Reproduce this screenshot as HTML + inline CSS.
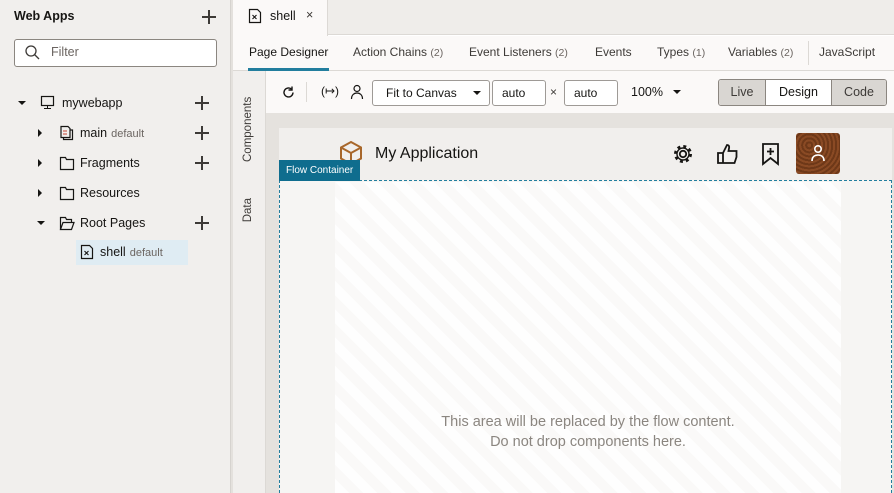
<!DOCTYPE html>
<html><head><style>
*{box-sizing:border-box;margin:0;padding:0}
body{width:894px;height:493px;overflow:hidden;font-family:"Liberation Sans",sans-serif;color:#161513;background:#fff;position:relative;font-size:13px}
.abs{position:absolute}
.plus{position:absolute;width:14px;height:14px}
.plus:before,.plus:after{content:"";position:absolute;background:#3d3a37}
.plus:before{left:6px;top:0;width:1.5px;height:14px}
.plus:after{top:6px;left:0;height:1.5px;width:14px}
.tri{position:absolute;width:0;height:0}
.tr{border-left:4px solid #161513;border-top:4px solid transparent;border-bottom:4px solid transparent}
.td{border-top:4px solid #161513;border-left:4px solid transparent;border-right:4px solid transparent}
.tree{position:absolute;font-size:12.5px}
.dim{color:#6b6561;font-size:11px;margin-left:4px}
.nav span{position:absolute;top:45px;font-size:12px;color:#3d3a37}
.nav small{color:#6b6561;font-size:10.5px}
.btn{position:absolute;top:80px;height:26px;border:1px solid #9e9a96;border-radius:3px;background:#fff;font-size:12px;line-height:24px;padding-left:9px}
</style></head><body>
<div class="abs" style="left:0;top:0;width:231px;height:493px;background:#f1efed;border-right:1px solid #d6d3cf"></div>
<div class="abs" style="left:231px;top:0;width:2px;height:493px;background:#e4e1dd"></div>
<div class="abs" style="left:14px;top:9px;font-weight:bold;font-size:12.5px">Web Apps</div>
<div class="plus" style="left:202px;top:10px;"></div>
<div class="abs" style="left:14px;top:39px;width:203px;height:28px;border:1px solid #8b8680;border-radius:3px;background:#fff"></div>
<svg class="abs" style="left:24px;top:44px" width="16" height="16"><circle cx="7" cy="7" r="5" fill="none" stroke="#3d3a37" stroke-width="1.3"/><line x1="10.5" y1="10.5" x2="15" y2="15" stroke="#3d3a37" stroke-width="1.3"/></svg>
<div class="abs" style="left:51px;top:45px;color:#6b6561;font-size:12.5px">Filter</div>

<div class="tri td" style="left:18px;top:101px"></div>
<svg class="abs" style="left:40px;top:95px" width="16" height="16"><rect x="1.5" y="1.5" width="12" height="9" fill="none" stroke="#161513" stroke-width="1.2"/><line x1="7.5" y1="10.5" x2="7.5" y2="13" stroke="#161513"/><line x1="4" y1="13.5" x2="11" y2="13.5" stroke="#161513"/></svg>
<div class="tree" style="left:62px;top:96px">mywebapp</div>
<div class="plus" style="left:195px;top:96px"></div>

<div class="tri tr" style="left:38px;top:129px"></div>
<svg class="abs" style="left:59px;top:125px" width="16" height="16"><path d="M2 1.5h7l2 2v9h-9z" fill="none" stroke="#161513" stroke-width="1.2"/><path d="M11 5h2.5v9.5h-9v-2" fill="none" stroke="#161513" stroke-width="1.2"/><line x1="4" y1="6" x2="8" y2="6" stroke="#c74634"/><line x1="4" y1="9" x2="8" y2="9" stroke="#c74634"/></svg>
<div class="tree" style="left:80px;top:126px">main<span class="dim">default</span></div>
<div class="plus" style="left:195px;top:126px"></div>

<div class="tri tr" style="left:38px;top:159px"></div>
<svg class="abs" style="left:59px;top:155px" width="16" height="16"><path d="M1.5 2.5h5l1 2h7v10h-13z" fill="none" stroke="#161513" stroke-width="1.2"/></svg>
<div class="tree" style="left:80px;top:156px">Fragments</div>
<div class="plus" style="left:195px;top:156px"></div>

<div class="tri tr" style="left:38px;top:189px"></div>
<svg class="abs" style="left:59px;top:185px" width="16" height="16"><path d="M1.5 2.5h5l1 2h7v10h-13z" fill="none" stroke="#161513" stroke-width="1.2"/></svg>
<div class="tree" style="left:80px;top:186px">Resources</div>

<div class="tri td" style="left:37px;top:221px"></div>
<svg class="abs" style="left:59px;top:215px" width="16" height="16"><path d="M1.5 14.5v-12h5l1 2h5v3M1.5 14.5l2.5-7h11l-2.5 7z" fill="none" stroke="#161513" stroke-width="1.2"/></svg>
<div class="tree" style="left:80px;top:216px">Root Pages</div>
<div class="plus" style="left:195px;top:216px"></div>

<div class="abs" style="left:76px;top:240px;width:112px;height:25px;background:#dfecf3"></div>
<svg class="abs" style="left:80px;top:244px" width="14" height="16"><path d="M1.5 1.5h8l3 3v10h-11z" fill="none" stroke="#161513" stroke-width="1.2"/><path d="M4.5 7l4 4M8.5 7l-4 4" stroke="#161513" stroke-width="1.1"/></svg>
<div class="tree" style="left:100px;top:245px">shell<span class="dim">default</span></div>

<div class="abs" style="left:233px;top:0;width:661px;height:35px;background:#efedea;border-bottom:1px solid #dcd9d5"></div>
<div class="abs" style="left:233px;top:0;width:95px;height:36px;background:#fbf9f8;border-right:1px solid #dcd9d5"></div>
<svg class="abs" style="left:248px;top:8px" width="14" height="16"><path d="M1.5 1.5h8l3 3v10h-11z" fill="none" stroke="#161513" stroke-width="1.2"/><path d="M4.5 7l4 4M8.5 7l-4 4" stroke="#161513" stroke-width="1.1"/></svg>
<div class="abs" style="left:270px;top:9px;font-size:12.5px">shell</div>
<div class="abs" style="left:306px;top:8px;font-size:12.5px;color:#3d3a37">×</div>

<div class="abs" style="left:233px;top:36px;width:661px;height:35px;background:#fbf9f8;border-bottom:1px solid #dcd9d5"></div>
<div class="nav">
<span style="left:249px;color:#161513">Page Designer</span>
<span style="left:353px">Action Chains <small>(2)</small></span>
<span style="left:469px">Event Listeners <small>(2)</small></span>
<span style="left:595px">Events</span>
<span style="left:657px">Types <small>(1)</small></span>
<span style="left:728px">Variables <small>(2)</small></span>
<span style="left:819px">JavaScript</span>
</div>
<div class="abs" style="left:248px;top:68px;width:81px;height:3px;background:#227e9e"></div>
<div class="abs" style="left:808px;top:41px;width:1px;height:24px;background:#dcd9d5"></div>

<div class="abs" style="left:233px;top:71px;width:33px;height:422px;background:#f1efed;border-right:1px solid #dcd9d5"></div>
<div class="abs" style="left:242px;top:90px;writing-mode:vertical-rl;transform:rotate(180deg);font-size:11.5px;color:#3d3a37;height:72px;text-align:left">Components</div>
<div class="abs" style="left:242px;top:198px;writing-mode:vertical-rl;transform:rotate(180deg);font-size:11.5px;color:#3d3a37">Data</div>

<div class="abs" style="left:266px;top:71px;width:628px;height:42px;background:#fbf9f8"></div>
<svg class="abs" style="left:281px;top:85px" width="15" height="15"><path d="M12 7.5a4.5 4.5 0 1 1-1.5-3.4" fill="none" stroke="#161513" stroke-width="1.4"/><path d="M11 1.5v3.5h-3.5" fill="none" stroke="#161513" stroke-width="1.4"/></svg>
<div class="abs" style="left:306px;top:82px;width:1px;height:20px;background:#dcd9d5"></div>
<div class="abs" style="left:321px;top:84px;font-size:12px">(↦)</div>
<svg class="abs" style="left:350px;top:84px" width="14" height="16"><circle cx="7" cy="4.5" r="3" fill="none" stroke="#161513" stroke-width="1.2"/><path d="M1.5 15c0-4 2.5-6 5.5-6s5.5 2 5.5 6" fill="none" stroke="#161513" stroke-width="1.2"/></svg>
<div class="btn" style="left:372px;width:118px;padding-left:13px">Fit to Canvas<div class="tri td" style="left:100px;top:10px"></div></div>
<div class="btn" style="left:492px;width:54px">auto</div>
<div class="abs" style="left:550px;top:85px;font-size:12px;color:#3d3a37">×</div>
<div class="btn" style="left:564px;width:54px">auto</div>
<div class="abs" style="left:631px;top:85px;font-size:12.5px">100%</div>
<div class="tri td" style="left:673px;top:90px"></div>
<div class="abs" style="left:718px;top:79px;width:169px;height:27px;border:1px solid #8b8680;border-radius:3px;overflow:hidden;display:flex;font-size:12.5px;line-height:25px;text-align:center">
<div style="width:47px;background:#d9d6d2;color:#3d3a37;border-right:1px solid #8b8680">Live</div>
<div style="width:66px;background:#fff;border-right:1px solid #8b8680">Design</div>
<div style="flex:1;background:#d9d6d2;color:#3d3a37">Code</div></div>

<div class="abs" style="left:266px;top:113px;width:628px;height:380px;background:#e5e2de"></div>
<div class="abs" style="left:279px;top:128px;width:613px;height:365px;background:#f1efed"></div>
<svg class="abs" style="left:338px;top:140px" width="26" height="26"><path d="M13 2l10 5.5v11L13 24 3 18.5v-11z M3 7.5l10 5.5 10-5.5 M13 13v11" fill="none" stroke="#a8672b" stroke-width="2"/></svg>
<div class="abs" style="left:375px;top:145px;font-size:16px">My Application</div>
<svg class="abs" style="left:672px;top:143px" width="22" height="22"><circle cx="11" cy="11" r="3.2" fill="none" stroke="#161513" stroke-width="1.8"/><circle cx="11" cy="11" r="7.5" fill="none" stroke="#161513" stroke-width="3" stroke-dasharray="2.9 3"/><circle cx="11" cy="11" r="6" fill="none" stroke="#161513" stroke-width="1.4"/></svg>
<svg class="abs" style="left:716px;top:142px" width="24" height="24"><path d="M2 11h5v10h-5z M7 11l4-8c2 0 2.5 1.5 2 3.5l-.5 2.5h8v6l-2 6h-11.5" fill="none" stroke="#161513" stroke-width="1.8"/></svg>
<svg class="abs" style="left:760px;top:142px" width="22" height="24"><path d="M3 2h15v20l-7.5-6-7.5 6z" fill="none" stroke="#161513" stroke-width="1.8"/><path d="M10.5 6v7M7 9.5h7" stroke="#161513" stroke-width="1.8"/></svg>
<div class="abs" style="left:796px;top:133px;width:44px;height:41px;border-radius:3px;background:repeating-radial-gradient(circle at 30% 30%,#8a4a24 0 2px,#6e3818 2px 4px)"></div>
<svg class="abs" style="left:809px;top:143px" width="18" height="20"><circle cx="9" cy="6" r="3.2" fill="none" stroke="#fff" stroke-width="1.6"/><path d="M3 18c0-4 2.5-6 6-6s6 2 6 6" fill="none" stroke="#fff" stroke-width="1.6"/></svg>

<div class="abs" style="left:279px;top:180px;width:613px;height:313px;border:1px dashed #227e9e;border-bottom:none;background:#f6f5f3"></div>
<div class="abs" style="left:335px;top:182px;width:506px;height:311px;background:repeating-linear-gradient(45deg,#fefefe 0 10px,#faf9f8 10px 20px)"></div>
<div class="abs" style="left:279px;top:160px;width:81px;height:21px;background:#0f6d8e;color:#fff;font-size:10px;line-height:21px;padding-left:7px">Flow Container</div>
<div class="abs" style="left:335px;top:412px;width:506px;text-align:center;color:#8b8680;font-size:14.5px;line-height:20px">This area will be replaced by the flow content.<br>Do not drop components here.</div>
</body></html>
